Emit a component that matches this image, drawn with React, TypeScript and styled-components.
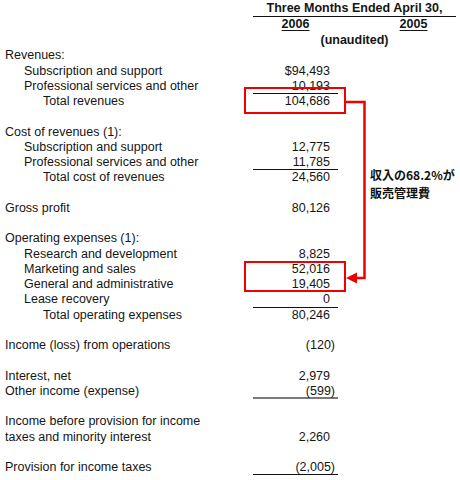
import React from "react";
import styled, { createGlobalStyle } from "styled-components";

const GlobalStyle = createGlobalStyle`
  html, body {
    margin: 0;
    padding: 0;
    background: #ffffff;
  }
  body {
    font-family: "Liberation Sans", Arial, sans-serif;
    color: #151515;
  }
`;

type Rule = "dark" | "grey";

type RowData = {
  label?: string;
  indent?: number;
  value?: string;
  paren?: boolean;
  rule?: Rule;
};

const rows: RowData[] = [
  { label: "Revenues:" },
  { label: "Subscription and support", indent: 1, value: "$94,493" },
  { label: "Professional services and other", indent: 1, value: "10,193", rule: "dark" },
  { label: "Total revenues", indent: 2, value: "104,686" },
  {},
  { label: "Cost of revenues (1):" },
  { label: "Subscription and support", indent: 1, value: "12,775" },
  { label: "Professional services and other", indent: 1, value: "11,785", rule: "dark" },
  { label: "Total cost of revenues", indent: 2, value: "24,560" },
  {},
  { label: "Gross profit", value: "80,126" },
  {},
  { label: "Operating expenses (1):" },
  { label: "Research and development", indent: 1, value: "8,825" },
  { label: "Marketing and sales", indent: 1, value: "52,016" },
  { label: "General and administrative", indent: 1, value: "19,405" },
  { label: "Lease recovery", indent: 1, value: "0", rule: "dark" },
  { label: "Total operating expenses", indent: 2, value: "80,246" },
  {},
  { label: "Income (loss) from operations", value: "(120)", paren: true },
  {},
  { label: "Interest, net", value: "2,979" },
  { label: "Other income (expense)", value: "(599)", paren: true, rule: "grey" },
  {},
  { label: "Income before provision for income" },
  { label: "taxes and minority interest", value: "2,260" },
  {},
  { label: "Provision for income taxes", value: "(2,005)", paren: true, rule: "dark" },
];

const App: React.FC = () => {
  return (
    <Page>
      <GlobalStyle />
      <Header>
        <HeaderTitle>Three Months Ended April 30,</HeaderTitle>
        <YearCell $col={2}>
          <Year>2006</Year>
        </YearCell>
        <YearCell $col={4}>
          <Year>2005</Year>
        </YearCell>
        <Unaudited>(unaudited)</Unaudited>
      </Header>

      <Sheet>
        {rows.map((row, i) => (
          <React.Fragment key={i}>
            <Label $indent={row.indent ?? 0}>{row.label ?? ""}</Label>
            <Value $paren={!!row.paren} $rule={row.rule}>
              {row.value ?? ""}
            </Value>
          </React.Fragment>
        ))}
      </Sheet>

      {/* red annotation drawn over the statement */}
      <Highlight $top={87} $height={27} />
      <Highlight $top={261} $height={31} />
      <Connector viewBox="0 0 460 480" width="460" height="480">
        <path d="M346 102 H364.5 V278 H355" fill="none" stroke="#f00000" strokeWidth="2.5" />
        <polygon points="346,278 357,272.5 357,283.5" fill="#f00000" />
      </Connector>
      <Callout>
        <CalloutLine>収入の68.2%が</CalloutLine>
        <CalloutLine>販売管理費</CalloutLine>
      </Callout>
    </Page>
  );
};

export default App;

// Style
const Page = styled.div`
  position: relative;
  width: 460px;
  height: 480px;
  box-sizing: border-box;
  padding: 1px 0 0 5px;
  overflow: hidden;
  font-size: 12.5px;
`;

// Header
const Header = styled.div`
  display: grid;
  grid-template-columns: 248px 85px 33px 85px;
  grid-template-rows: 16px 16px 15.4px;
  font-weight: 700;
`;

const HeaderTitle = styled.div`
  grid-column: 2 / 5;
  grid-row: 1;
  text-align: center;
  line-height: 15px;
  border-bottom: 1px solid #111;
  white-space: nowrap;
`;

const YearCell = styled.div<{ $col: number }>`
  grid-column: ${(p) => p.$col};
  grid-row: 2;
  text-align: center;
  line-height: 15px;
`;

const Year = styled.span`
  text-decoration: underline;
  text-decoration-thickness: 1px;
  text-underline-offset: 2px;
`;

const Unaudited = styled.div`
  grid-column: 2 / 5;
  grid-row: 3;
  text-align: center;
  line-height: 15.4px;
`;

// Statement rows
const Sheet = styled.div`
  display: grid;
  grid-template-columns: 248px 85px;
  grid-auto-rows: 15.26px;
  line-height: 15.26px;
`;

const Label = styled.div<{ $indent: number }>`
  grid-column: 1;
  padding-left: ${(p) => p.$indent * 19}px;
  white-space: nowrap;
`;

const Value = styled.div<{ $paren: boolean; $rule?: Rule }>`
  grid-column: 2;
  box-sizing: border-box;
  text-align: right;
  padding-right: ${(p) => (p.$paren ? 3 : 8)}px;
  white-space: nowrap;
  border-bottom: ${(p) =>
    p.$rule === "grey" ? "2px solid #7a7a7a" : p.$rule === "dark" ? "1px solid #111" : "none"};
`;

// Annotation
const Highlight = styled.div<{ $top: number; $height: number }>`
  position: absolute;
  left: 244px;
  top: ${(p) => p.$top}px;
  width: 102px;
  height: ${(p) => p.$height}px;
  box-sizing: border-box;
  border: 2px solid #f00000;
`;

const Connector = styled.svg`
  position: absolute;
  left: 0;
  top: 0;
  pointer-events: none;
`;

const Callout = styled.div`
  position: absolute;
  left: 370px;
  top: 166px;
  display: flex;
  flex-direction: column;
  font-family: "Noto Sans CJK JP", "Liberation Sans", sans-serif;
  font-weight: 700;
  font-size: 12px;
  color: #111;
`;

const CalloutLine = styled.div`
  height: 17.5px;
  line-height: 17.5px;
  white-space: nowrap;
`;
